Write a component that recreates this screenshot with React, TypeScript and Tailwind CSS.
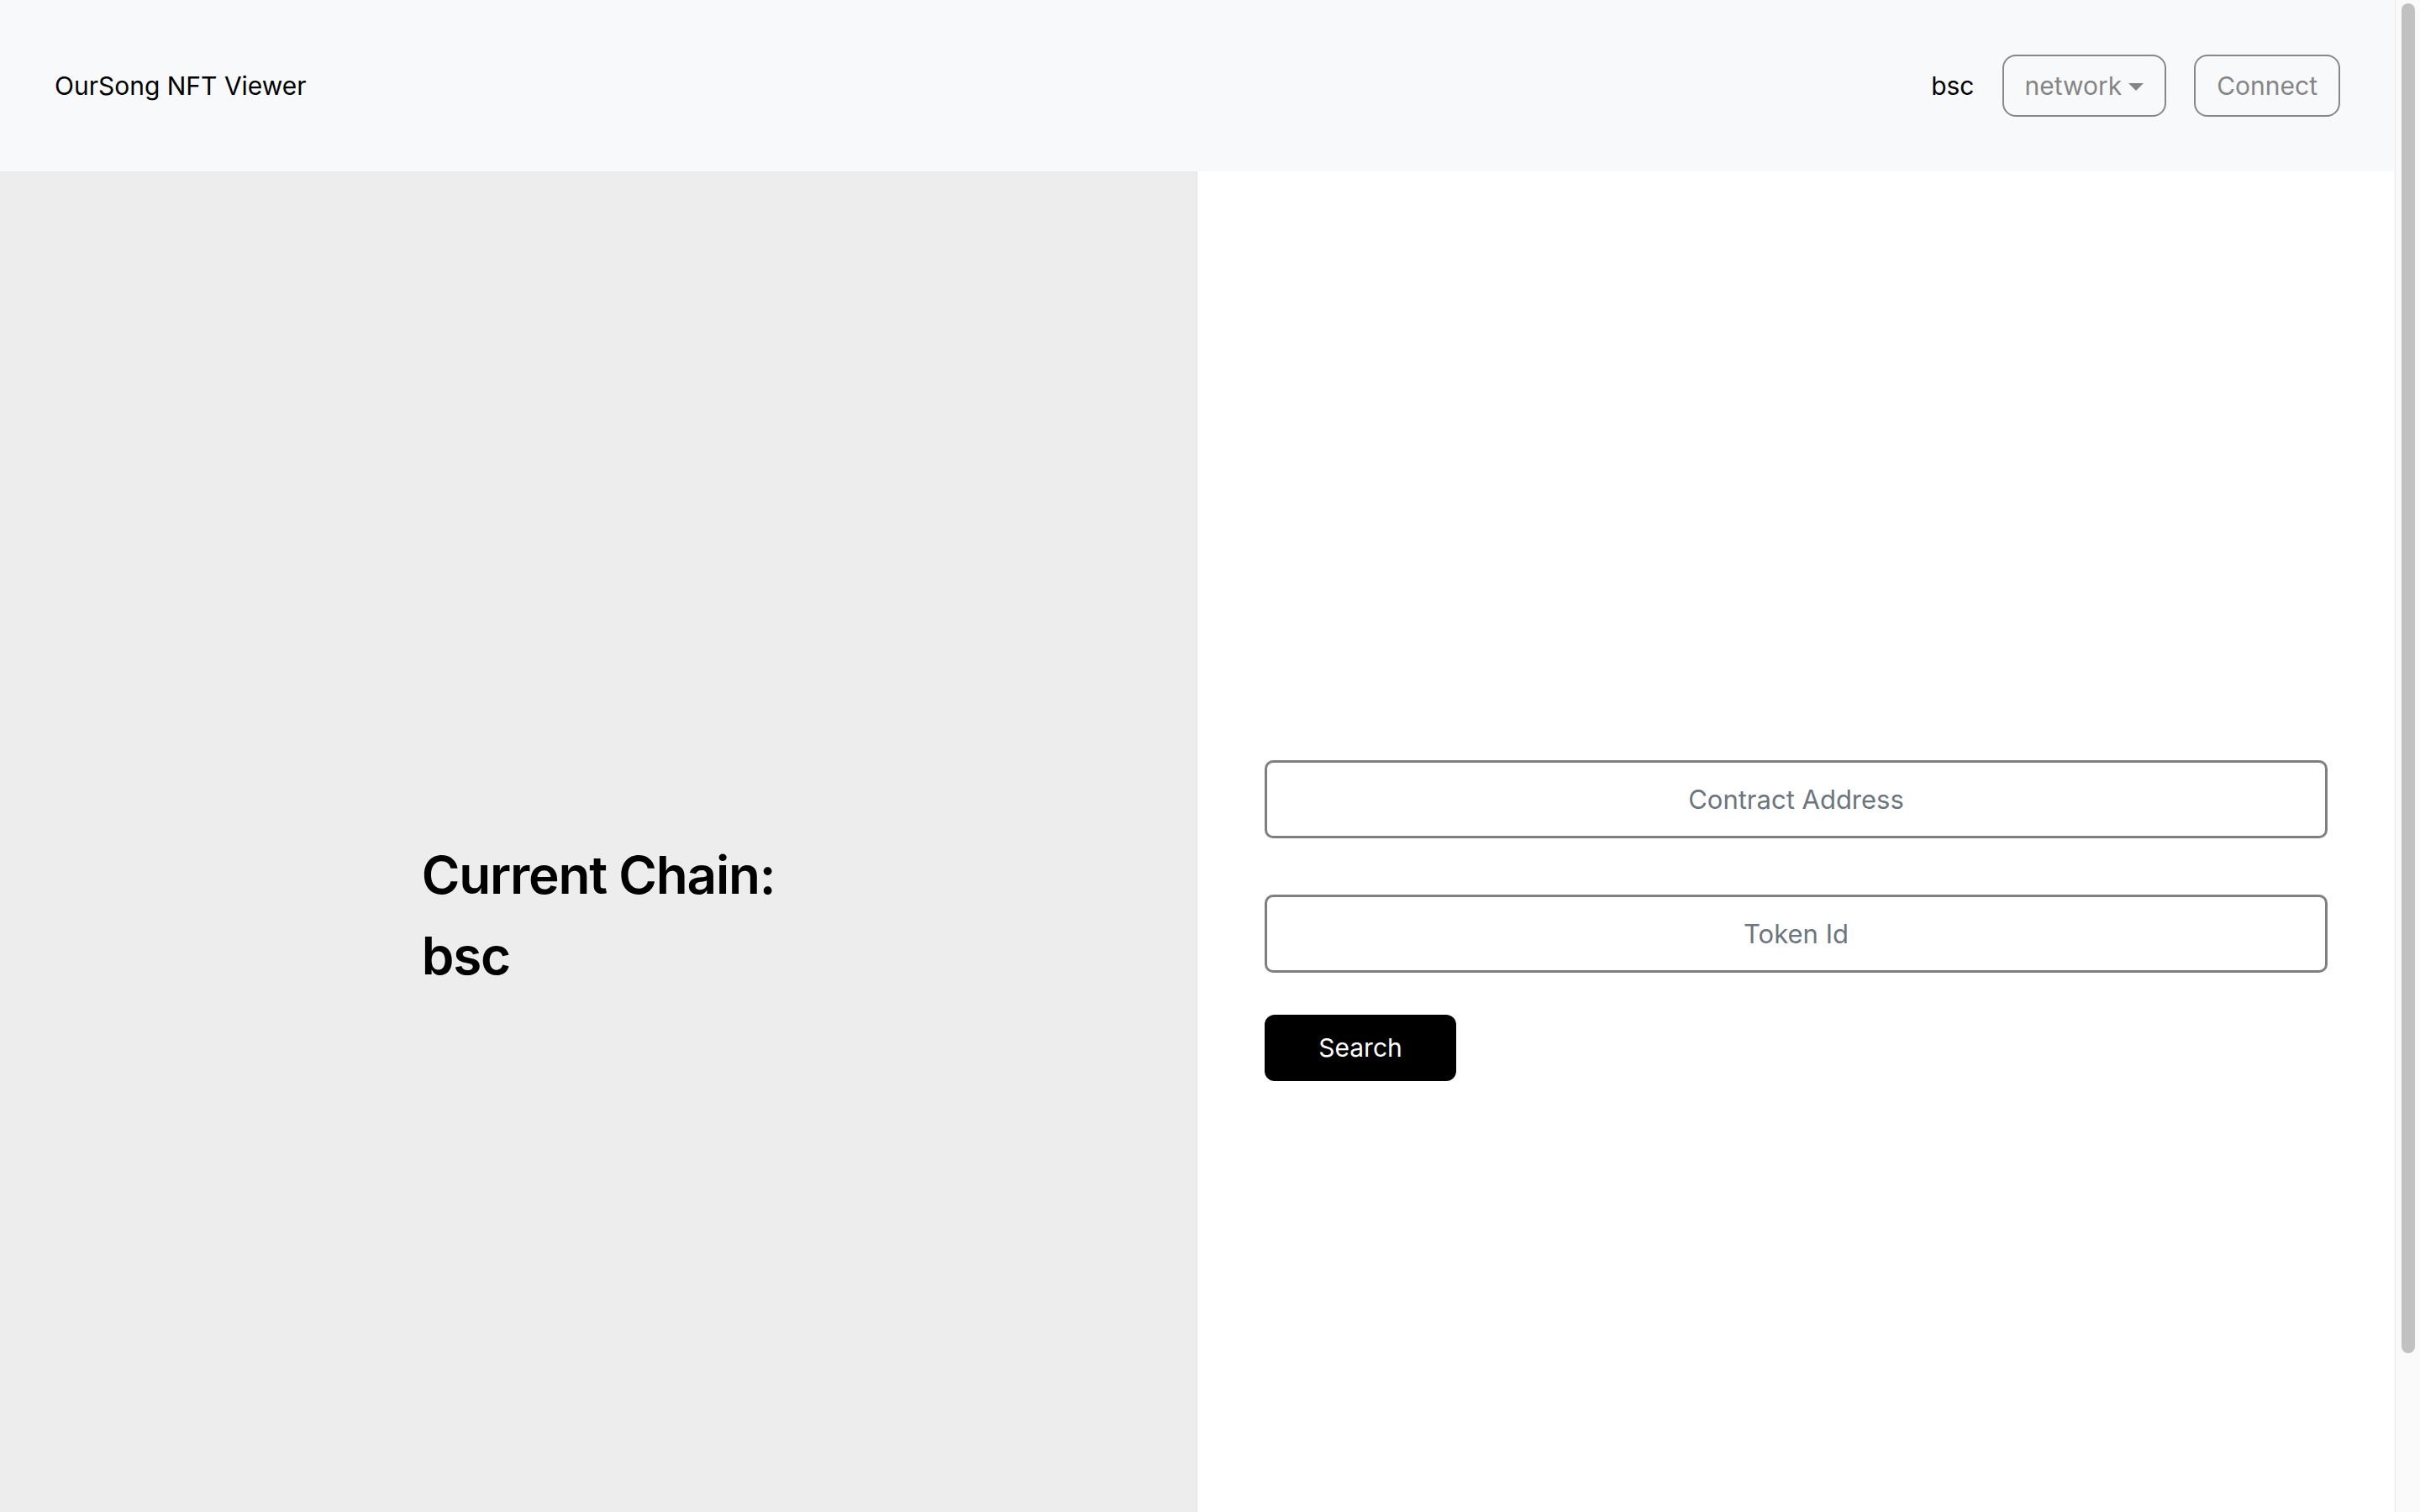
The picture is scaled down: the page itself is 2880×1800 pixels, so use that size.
import { useState } from 'react';

const App = () => {
  const [contract, setContract] = useState('');
  const [tokenId, setTokenId] = useState('');
  const chain = 'bsc';

  return (
    <div className="h-screen flex overflow-hidden font-['Inter',sans-serif] text-black">
      <div className="flex-1 min-w-0">
        {/* Navbar */}
        <header className="h-[204px] bg-[#f8f9fa] flex items-center justify-between pl-[65px] pr-[65px]">
          <span className="text-[30px]">OurSong NFT Viewer</span>
          <div className="flex items-center gap-[33px]">
            <span className="text-[30px]">{chain}</span>
            <button className="h-[74px] px-[25px] flex items-center border-2 border-[#888] rounded-[16px] text-[30px] text-[#858585]">
              network
              <span className="ml-[8px] mt-[2px] w-0 h-0 border-t-[9px] border-t-[#858585] border-x-[9px] border-x-transparent" />
            </button>
            <button className="h-[74px] px-[25px] border-2 border-[#888] rounded-[16px] text-[30px] text-[#858585]">
              Connect
            </button>
          </div>
        </header>

        <main className="grid grid-cols-2 h-[1776px]">
          {/* Chain info */}
          <section className="bg-[#ededed] border-r border-[#e3e3e3] flex items-center justify-center">
            <div className="mb-[4px]">
              <h2 className="text-[62px] leading-[96px] font-semibold tracking-[-1.2px]">Current Chain:</h2>
              <h2 className="text-[62px] leading-[96px] font-semibold tracking-[-1.2px]">{chain}</h2>
            </div>
          </section>

          {/* Search form */}
          <section className="bg-white flex flex-col justify-center px-[80px] pt-[8px]">
            <input
              value={contract}
              onChange={(e) => setContract(e.target.value)}
              placeholder="Contract Address"
              className="w-full h-[93px] border-[3px] border-[#7f7f7f] rounded-[10px] text-center text-[31px] placeholder:text-[#6c757d] outline-none"
            />
            <input
              value={tokenId}
              onChange={(e) => setTokenId(e.target.value)}
              placeholder="Token Id"
              className="mt-[67px] w-full h-[93px] border-[3px] border-[#7f7f7f] rounded-[10px] text-center text-[31px] placeholder:text-[#6c757d] outline-none"
            />
            <div className="mt-[50px]">
              <button className="w-[228px] h-[79px] bg-black text-white rounded-[12px] text-[30px]">
                Search
              </button>
            </div>
          </section>
        </main>
      </div>

      {/* Page scrollbar */}
      <div className="w-[30px] shrink-0 bg-[#fafafa] border-l border-[#e8e8e8] pl-[7px] pr-[6px] pt-[4px]">
        <div className="h-[1607px] bg-[#c1c1c1] rounded-[8px]" />
      </div>
    </div>
  );
};

export default App;
